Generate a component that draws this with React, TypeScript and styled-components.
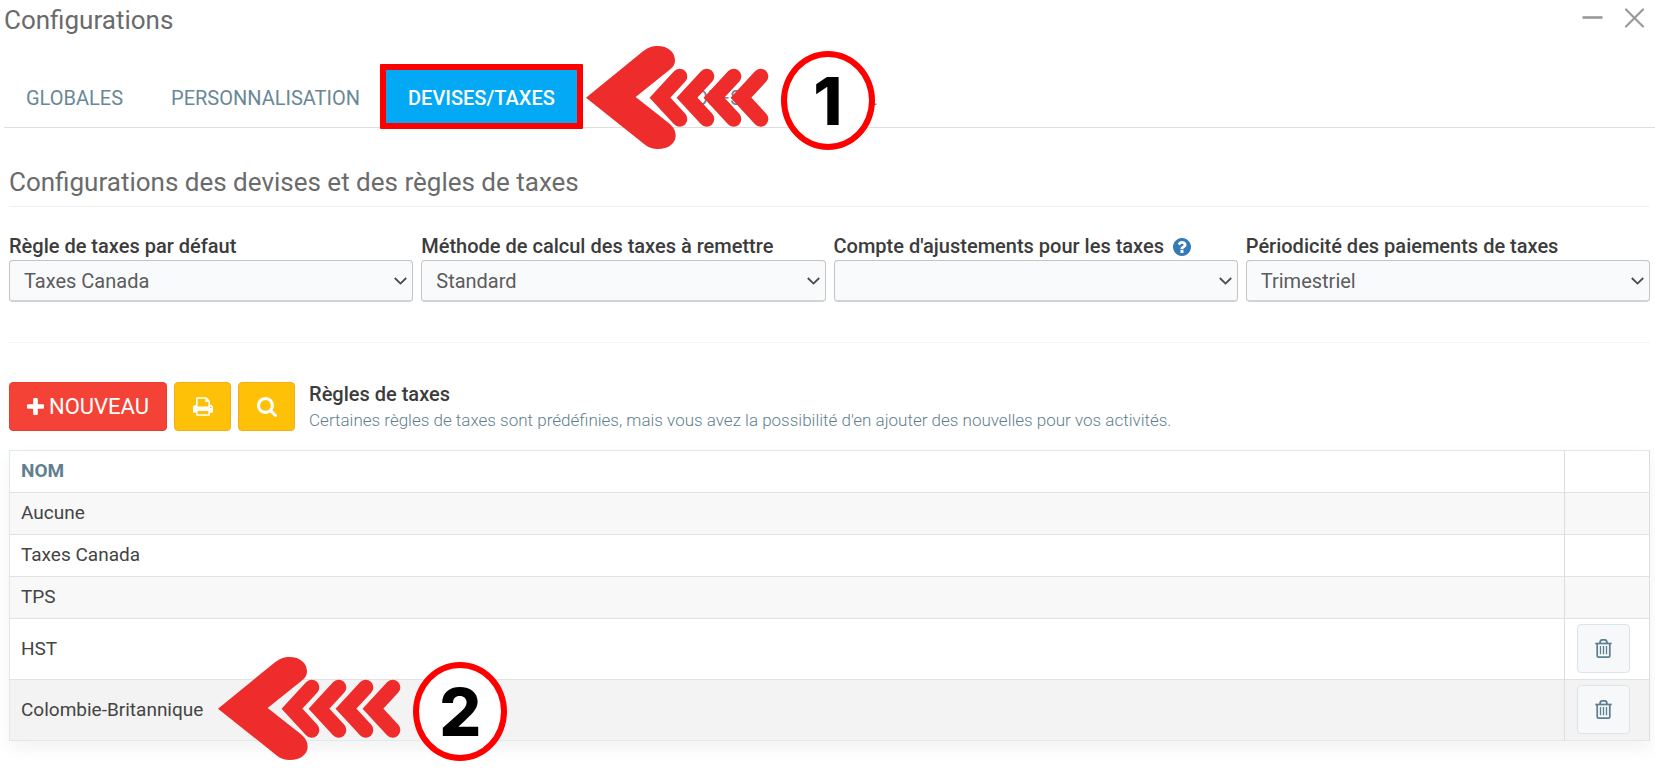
import React, { useState } from "react";
import styled, { createGlobalStyle, css } from "styled-components";

const GlobalStyle = createGlobalStyle`
  * { box-sizing: border-box; }
  body {
    margin: 0;
    background: #fff;
    color: #3c3c3c;
    font-family: Roboto, "Liberation Sans", sans-serif;
    font-size: 20px;
  }
  button, select { font-family: inherit; }
`;

const Page = styled.div`
  padding-left: 4px;
`;

const Header = styled.header`
  display: flex;
  align-items: center;
  justify-content: space-between;
  height: 40px;
  padding-right: 10px;
`;

const Title = styled.h1`
  margin: 0;
  font-size: 26px;
  font-weight: 400;
  line-height: 40px;
  color: #6b6b6b;
`;

const WindowActions = styled.div`
  display: flex;
  gap: 20px;
  padding-bottom: 5px;
`;

const WindowButton = styled.button`
  display: flex;
  padding: 0;
  border: 0;
  background: none;
  color: #999;
  cursor: pointer;
`;

const Tabs = styled.nav`
  display: flex;
  gap: 4px;
  margin-top: 29px;
  border-bottom: 1px solid #ddd;
`;

const TabItem = styled.div`
  position: relative;
`;

const Tab = styled.a<{ $active?: boolean }>`
  display: block;
  padding: 17px 22px;
  font-size: 20px;
  line-height: 24px;
  text-decoration: none;
  white-space: nowrap;
  color: #698896;
  ${(p) =>
    p.$active &&
    css`
      background: #03a9f4;
      color: #fff;
      font-weight: 500;
    `}
`;

const Highlight = styled.span`
  position: absolute;
  inset: -5px -6px -2px;
  border: 6px solid #f00;
  border-radius: 1px;
  pointer-events: none;
`;

const Callout = styled.span<{ $gap: number }>`
  position: absolute;
  z-index: 1;
  top: calc(50% - 53px);
  left: calc(100% + ${(p) => p.$gap}px);
  display: flex;
  align-items: flex-end;
  gap: 11px;
  pointer-events: none;
`;

const StepNumber = styled.span`
  display: flex;
  align-items: center;
  justify-content: center;
  width: 94px;
  height: 99px;
  border: 6px solid #f00;
  border-radius: 50%;
  background: #fff;
  color: #000;
  font-family: Inter, "Liberation Sans", sans-serif;
  font-size: 66px;
  font-weight: 800;
  line-height: 1;
`;

const Content = styled.main`
  padding: 36px 5px 34px;
`;

const SectionTitle = styled.h2`
  margin: 0;
  padding-bottom: 6px;
  border-bottom: 1px solid #f0f0f0;
  font-size: 26px;
  font-weight: 400;
  line-height: 36px;
  color: #6b6b6b;
`;

const Fields = styled.div`
  display: grid;
  grid-template-columns: repeat(4, 1fr);
  gap: 8px;
  margin-top: 26px;
  padding-bottom: 40px;
  border-bottom: 1px solid #f4f4f4;
`;

const FieldHead = styled.div`
  display: flex;
  align-items: center;
  gap: 9px;
  white-space: nowrap;
`;

const Label = styled.label`
  font-size: 20px;
  font-weight: 500;
  line-height: 27px;
`;

const SelectBox = styled.div`
  display: grid;
  align-items: center;
  > * { grid-area: 1 / 1; }
  > svg {
    justify-self: end;
    margin-right: 6px;
    pointer-events: none;
  }
`;

const Select = styled.select`
  appearance: none;
  width: 100%;
  height: 42px;
  padding: 0 24px 0 14px;
  border: 1px solid #c4c4c4;
  border-bottom: 2px solid #d2d2d2;
  border-radius: 4px;
  background: #f9fafc;
  color: #5c5c5c;
  font-size: 20px;
`;

const Toolbar = styled.div`
  display: flex;
  gap: 7px;
  margin: 39px 0 16px;
`;

const Button = styled.button<{ $kind: "danger" | "warning" }>`
  display: flex;
  align-items: center;
  justify-content: center;
  gap: 5px;
  min-width: 57px;
  height: 49px;
  padding: 0 17px;
  border: 1px solid ${(p) => (p.$kind === "danger" ? "#e53c35" : "#f5ad1c")};
  border-radius: 4px;
  background: ${(p) => (p.$kind === "danger" ? "#f44336" : "#ffc107")};
  color: #fff;
  font-size: 22px;
  cursor: pointer;
`;

const Intro = styled.div`
  padding-left: 7px;
`;

const IntroTitle = styled.h3`
  margin: 0;
  font-size: 20px;
  font-weight: 500;
  line-height: 24px;
`;

const IntroText = styled.p`
  margin: 0;
  font-size: 17px;
  font-weight: 300;
  line-height: 28px;
  color: #5f7f8e;
`;

const Table = styled.table`
  width: 100%;
  border-collapse: collapse;
  border: 1px solid #dfe8ea;
  border-right-color: #ddd;
  box-shadow: 0 8px 16px rgba(0, 0, 0, 0.05);
  font-size: 19px;
  line-height: 24px;
`;

const Row = styled.tr<{ $tone?: "stripe" | "hover" }>`
  background: ${(p) =>
    p.$tone === "stripe" ? "#f8f8f8" : p.$tone === "hover" ? "#f3f3f3" : "#fff"};
  & + & { border-top: 1px solid #e2e2e2; }
`;

const HeadCell = styled.th<{ $narrow?: boolean }>`
  height: 42px;
  padding: 0 11px 1px;
  border-right: 1px solid #ddd;
  border-bottom: 1px solid #e2e2e2;
  text-align: left;
  font-weight: 700;
  color: #5f7f90;
  ${(p) => p.$narrow && css`width: 85px;`}
`;

const Cell = styled.td`
  height: 42px;
  padding: 0 11px 1px;
  border-right: 1px solid #ddd;
  color: #444;
`;

const ActionCell = styled(Cell)`
  padding: 5px 12px 6px;
`;

const Name = styled.span`
  position: relative;
`;

const DeleteButton = styled.button`
  display: flex;
  align-items: center;
  justify-content: center;
  width: 53px;
  height: 49px;
  padding: 0;
  border: 1px solid #dde4e8;
  border-radius: 4px;
  background: #f6f8fa;
  color: #5c7f91;
  cursor: pointer;
`;

const MinusIcon = () => (
  <svg width="22" height="22" viewBox="0 0 22 22" stroke="currentColor" strokeWidth="2.6">
    <path d="M1.5 10.5h20" />
  </svg>
);

const CloseIcon = () => (
  <svg width="22" height="22" viewBox="0 0 22 22" stroke="currentColor" strokeWidth="2.2" strokeLinecap="round">
    <path d="M3 2.5l17 17M20 2.5l-17 17" />
  </svg>
);

const ChevronIcon = () => (
  <svg width="13" height="8" viewBox="0 0 13 8" fill="none" stroke="#4a4a4a" strokeWidth="1.8">
    <path d="M.8 1l5.7 5.6L12.2 1" />
  </svg>
);

const PlusIcon = () => (
  <svg width="17" height="17" viewBox="192 128 1408 1408" fill="currentColor">
    <path d="M1600 736v192q0 40-28 68t-68 28h-416v416q0 40-28 68t-68 28h-192q-40 0-68-28t-28-68v-416h-416q-40 0-68-28t-28-68v-192q0-40 28-68t68-28h416v-416q0-40 28-68t68-28h192q40 0 68 28t28 68v416h416q40 0 68 28t28 68z" />
  </svg>
);

const PrintIcon = () => (
  <svg width="20" height="19" viewBox="64 128 1664 1536" fill="currentColor">
    <path d="M448 1536h896v-256h-896v256zm0-640h896v-384h-160q-40 0-68-28t-28-68v-160h-640v640zm1152 64q0-26-19-45t-45-19-45 19-19 45 19 45 45 19 45-19 19-45zm128 0v416q0 13-9.5 22.5t-22.5 9.5h-224v160q0 40-28 68t-68 28h-960q-40 0-68-28t-28-68v-160h-224q-13 0-22.5-9.5t-9.5-22.5v-416q0-79 56.5-135.5t135.5-56.5h64v-544q0-40 28-68t68-28h672q40 0 88 20t76 48l152 152q28 28 48 76t20 88v256h64q79 0 135.5 56.5t56.5 135.5z" />
  </svg>
);

const SearchIcon = () => (
  <svg width="20" height="20" viewBox="64 128 1664 1664" fill="currentColor">
    <path d="M1216 832q0-185-131.5-316.5t-316.5-131.5-316.5 131.5-131.5 316.5 131.5 316.5 316.5 131.5 316.5-131.5 131.5-316.5zm512 832q0 52-38 90t-90 38q-54 0-90-38l-343-342q-179 124-399 124-143 0-273.5-55.5t-225-150-150-225-55.5-273.5 55.5-273.5 150-225 225-150 273.5-55.5 273.5 55.5 225 150 150 225 55.5 273.5q0 220-124 399l343 343q37 37 37 90z" />
  </svg>
);

const HelpIcon = () => (
  <svg width="18" height="18" viewBox="128 128 1536 1536" fill="#337ab7" role="img" aria-label="Aide">
    <path d="M1024 1376v-192q0-14-9-23t-23-9h-192q-14 0-23 9t-9 23v192q0 14 9 23t23 9h192q14 0 23-9t9-23zm256-672q0-88-55.5-163t-138.5-116-170-41q-243 0-371 213-15 24 8 42l132 100q7 6 19 6 16 0 25-12 53-68 86-92 34-24 86-24 48 0 85.5 26t37.5 59q0 38-20 61t-68 45q-63 28-115.5 86.5t-52.5 125.5v36q0 14 9 23t23 9h192q14 0 23-9t9-23q0-19 21.5-49.5t54.5-49.5q32-18 49-28.5t46-35 44.5-48 28-60.5 12.5-81zm384 192q0 209-103 385.5t-279.5 279.5-385.5 103-385.5-103-279.5-279.5-103-385.5 103-385.5 279.5-279.5 385.5-103 385.5 103 279.5 279.5 103 385.5z" />
  </svg>
);

const TrashIcon = () => (
  <svg width="17" height="19" viewBox="0 0 17 19" fill="none" stroke="currentColor" strokeWidth="1.7">
    <path d="M.3 4.5h16.4" />
    <path d="M5 4.2c0-2.2.8-3.4 2.2-3.4h2.6c1.4 0 2.2 1.2 2.2 3.4" />
    <path d="M2.2 4.5v12.2c0 1 .5 1.5 1.4 1.5h9.8c.9 0 1.4-.5 1.4-1.5V4.5" />
    <path d="M5.5 7v8.2M8.5 7v8.2M11.5 7v8.2" strokeWidth="1.3" />
  </svg>
);

const ArrowIcon = () => (
  <svg width="185" height="105" viewBox="0 0 555 315" fill="#ee2c2c">
    <path d="M3 158L175 18C191 6 204 3 217 3C250 3 270 22 270 46C270 60 262 69 252 76L152 156L252 235C264 245 272 257 272 272C272 295 250 312 218 312C204 312 192 308 180 299Z" />
    {[0, 81, 162, 243].map((dx) => (
      <path
        key={dx}
        d={`M${284 + dx} 94L${225 + dx} 158L${284 + dx} 222`}
        fill="none"
        stroke="#ee2c2c"
        strokeWidth="46"
        strokeLinecap="round"
      />
    ))}
  </svg>
);

const Step = ({ number, gap }: { number: number; gap: number }) => (
  <Callout $gap={gap}>
    <ArrowIcon />
    <StepNumber>{number}</StepNumber>
  </Callout>
);

const tabs = ["GLOBALES", "PERSONNALISATION", "DEVISES/TAXES", "API", "RÔLES", "GÉNÉRAL"];

const fields = [
  { id: "regle", label: "Règle de taxes par défaut", options: ["Taxes Canada", "Aucune", "TPS", "HST"] },
  { id: "methode", label: "Méthode de calcul des taxes à remettre", options: ["Standard"] },
  { id: "compte", label: "Compte d'ajustements pour les taxes", options: [""], help: true },
  { id: "periode", label: "Périodicité des paiements de taxes", options: ["Trimestriel"] },
];

type Rule = { name: string; tone?: "stripe" | "hover"; removable?: boolean; step?: number };

const rules: Rule[] = [
  { name: "Aucune", tone: "stripe" },
  { name: "Taxes Canada" },
  { name: "TPS", tone: "stripe" },
  { name: "HST", removable: true },
  { name: "Colombie-Britannique", tone: "hover", removable: true, step: 2 },
];

const Field = ({ id, label, options, help }: { id: string; label: string; options: string[]; help?: boolean }) => {
  const [value, setValue] = useState(options[0]);
  return (
    <div>
      <FieldHead>
        <Label htmlFor={id}>{label}</Label>
        {help && <HelpIcon />}
      </FieldHead>
      <SelectBox>
        <Select id={id} value={value} onChange={(e) => setValue(e.target.value)}>
          {options.map((o) => (
            <option key={o} value={o}>{o}</option>
          ))}
        </Select>
        <ChevronIcon />
      </SelectBox>
    </div>
  );
};

export default function App() {
  return (
    <>
      <GlobalStyle />
      <Page>
        <Header>
          <Title>Configurations</Title>
          <WindowActions>
            <WindowButton type="button" aria-label="Réduire"><MinusIcon /></WindowButton>
            <WindowButton type="button" aria-label="Fermer"><CloseIcon /></WindowButton>
          </WindowActions>
        </Header>
        <Tabs>
          {tabs.map((name) => {
            const active = name === "DEVISES/TAXES";
            return (
              <TabItem key={name}>
                <Tab href="#" $active={active} aria-current={active ? "page" : undefined}>{name}</Tab>
                {active && <Highlight />}
                {active && <Step number={1} gap={8} />}
              </TabItem>
            );
          })}
        </Tabs>
        <Content>
          <SectionTitle>Configurations des devises et des règles de taxes</SectionTitle>
          <Fields>
            {fields.map((f) => <Field key={f.id} {...f} />)}
          </Fields>
          <Toolbar>
            <Button type="button" $kind="danger"><PlusIcon />NOUVEAU</Button>
            <Button type="button" $kind="warning" aria-label="Imprimer"><PrintIcon /></Button>
            <Button type="button" $kind="warning" aria-label="Rechercher"><SearchIcon /></Button>
            <Intro>
              <IntroTitle>Règles de taxes</IntroTitle>
              <IntroText>
                Certaines règles de taxes sont prédéfinies, mais vous avez la possibilité d'en ajouter des nouvelles pour vos activités.
              </IntroText>
            </Intro>
          </Toolbar>
          <Table>
            <thead>
              <Row>
                <HeadCell scope="col">NOM</HeadCell>
                <HeadCell $narrow aria-label="Actions" />
              </Row>
            </thead>
            <tbody>
              {rules.map((rule) => (
                <Row key={rule.name} $tone={rule.tone}>
                  <Cell>
                    <Name>
                      {rule.name}
                      {rule.step && <Step number={rule.step} gap={14} />}
                    </Name>
                  </Cell>
                  {rule.removable ? (
                    <ActionCell>
                      <DeleteButton type="button" aria-label={`Supprimer ${rule.name}`}><TrashIcon /></DeleteButton>
                    </ActionCell>
                  ) : (
                    <Cell />
                  )}
                </Row>
              ))}
            </tbody>
          </Table>
        </Content>
      </Page>
    </>
  );
}
